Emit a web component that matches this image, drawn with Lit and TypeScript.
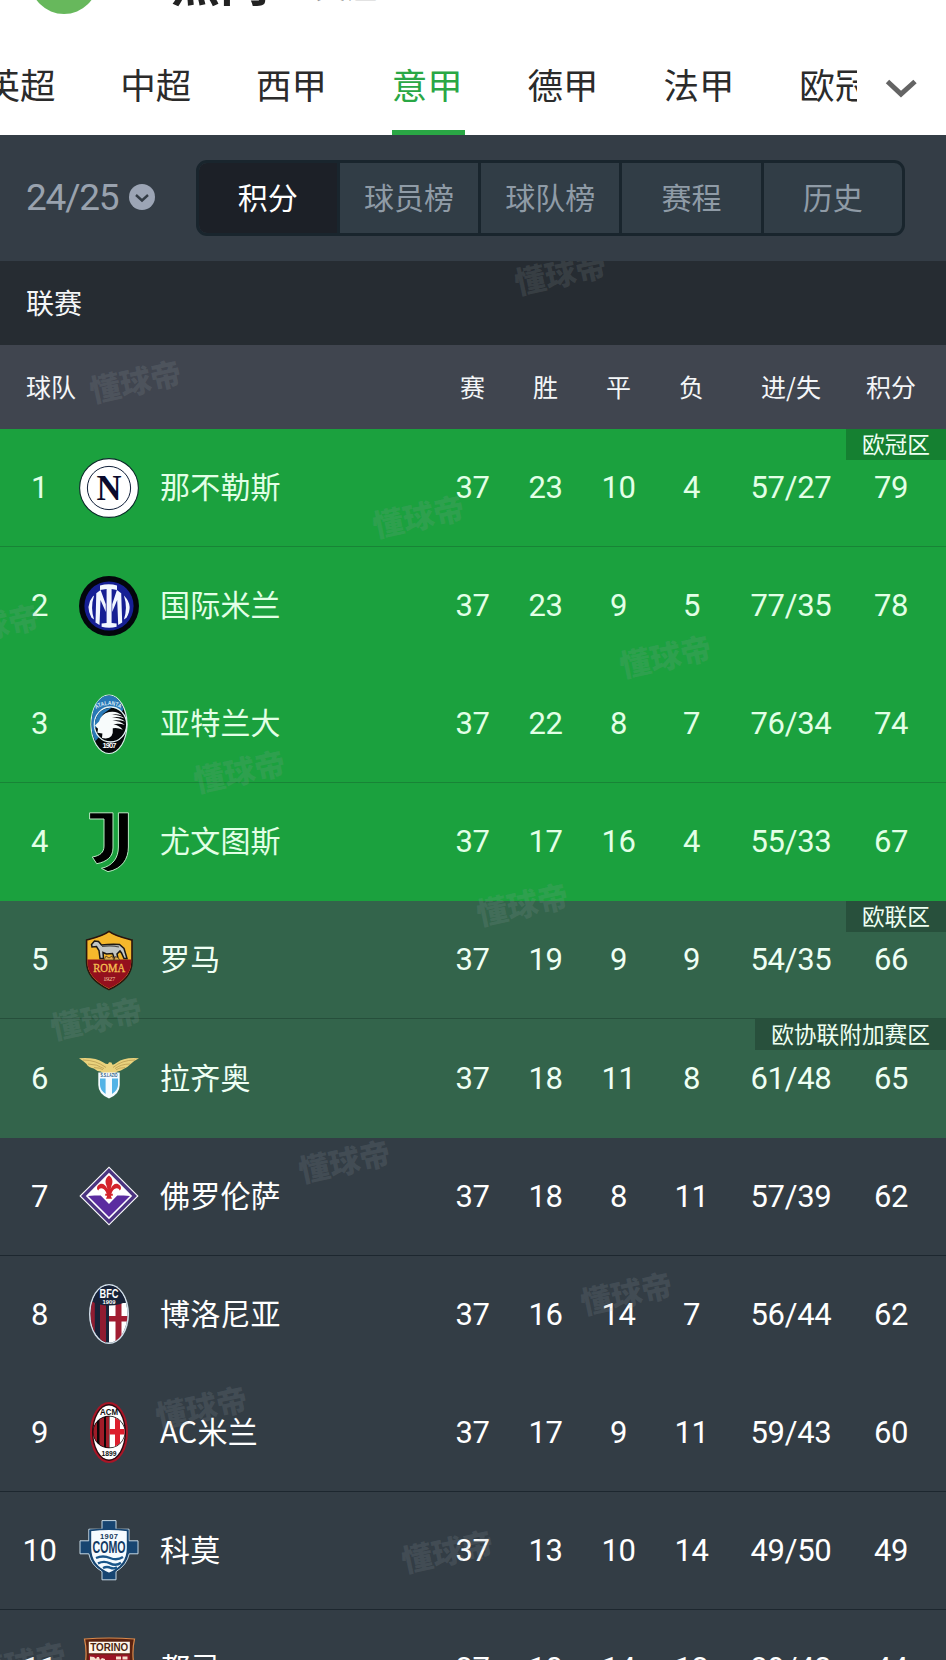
import { html, svg, css, LitElement } from 'lit'
import { customElement, property, state } from 'lit/decorators.js'
import { classMap } from 'lit/directives/class-map.js'
import { styleMap } from 'lit/directives/style-map.js'

interface Team {
  rank: number
  name: string
  crest: string
  played: number
  won: number
  drawn: number
  lost: number
  goals: string
  points: number
  zone?: 'ucl' | 'uel'
  badge?: string
  line?: boolean
}

const LEAGUES = ['英超', '中超', '西甲', '意甲', '德甲', '法甲', '欧冠']
const SECTIONS = ['积分', '球员榜', '球队榜', '赛程', '历史']
const COLUMNS = ['赛', '胜', '平', '负', '进/失', '积分']

const TEAMS: Team[] = [
  { rank: 1, name: '那不勒斯', crest: 'napoli', played: 37, won: 23, drawn: 10, lost: 4, goals: '57/27', points: 79, zone: 'ucl', badge: '欧冠区', line: true },
  { rank: 2, name: '国际米兰', crest: 'inter', played: 37, won: 23, drawn: 9, lost: 5, goals: '77/35', points: 78, zone: 'ucl' },
  { rank: 3, name: '亚特兰大', crest: 'atalanta', played: 37, won: 22, drawn: 8, lost: 7, goals: '76/34', points: 74, zone: 'ucl', line: true },
  { rank: 4, name: '尤文图斯', crest: 'juventus', played: 37, won: 17, drawn: 16, lost: 4, goals: '55/33', points: 67, zone: 'ucl' },
  { rank: 5, name: '罗马', crest: 'roma', played: 37, won: 19, drawn: 9, lost: 9, goals: '54/35', points: 66, zone: 'uel', badge: '欧联区', line: true },
  { rank: 6, name: '拉齐奥', crest: 'lazio', played: 37, won: 18, drawn: 11, lost: 8, goals: '61/48', points: 65, zone: 'uel', badge: '欧协联附加赛区' },
  { rank: 7, name: '佛罗伦萨', crest: 'fiorentina', played: 37, won: 18, drawn: 8, lost: 11, goals: '57/39', points: 62, line: true },
  { rank: 8, name: '博洛尼亚', crest: 'bologna', played: 37, won: 16, drawn: 14, lost: 7, goals: '56/44', points: 62 },
  { rank: 9, name: 'AC米兰', crest: 'milan', played: 37, won: 17, drawn: 9, lost: 11, goals: '59/43', points: 60, line: true },
  { rank: 10, name: '科莫', crest: 'como', played: 37, won: 13, drawn: 10, lost: 14, goals: '49/50', points: 49, line: true },
  { rank: 11, name: '都灵', crest: 'torino', played: 37, won: 10, drawn: 14, lost: 13, goals: '39/43', points: 44 },
]

// centres of the repeated watermark, relative to the table
const MARKS = [
  [560, 11], [135, 119], [418, 254], [-7, 363], [665, 394], [239, 509], [522, 642],
  [96, 756], [344, 899], [626, 1031], [201, 1145], [447, 1289], [20, 1401],
]

const CRESTS: Record<string, unknown> = {
  napoli: svg`
    <circle cx="30" cy="30" r="29.4" fill="#fff" stroke="#0c2a2a" stroke-width="1.1"/>
    <circle cx="30" cy="30" r="21.6" fill="none" stroke="#10203a" stroke-width="1"/>
    <text x="30" y="41.8" font-size="35" font-weight="700" text-anchor="middle" textLength="25"
      lengthAdjust="spacingAndGlyphs" font-family="Liberation Serif, serif" fill="#0a0a2c">N</text>`,
  inter: svg`
    <circle cx="30" cy="30" r="30" fill="#03060c"/>
    <circle cx="30" cy="30" r="24.6" fill="#161f94"/>
    <g fill="#f2f7ff">
      <path d="M21 9.4Q30 7 38 9.4V14l-5.4-1v34l5 .4v3.4q-7.600 1.800-15 0v-3.400l5-.4V13L21 14z"/>
      <path d="M17.300 17.200l4.300-3.300 5.200 14.400v7.800l-5.300-12-1 25-4-2.600z"/>
      <path d="M42.200 17.200l-4.300-3.300-4.700 14.400v7.800l5-12 1 25 4-2.600z"/>
      <path d="M13.800 20.600Q6 30 12.500 41.800l2.600 1.600q-4-12 0-24z"/>
      <path d="M45.800 20.600Q54.500 30 47.500 41.800l-2.600 1.600q4-12 0-24z"/>
    </g>`,
  atalanta: svg`
    <ellipse cx="30" cy="30.200" rx="18.600" ry="29.800" fill="#d9f3ea"/>
    <ellipse cx="30" cy="30.200" rx="17.400" ry="28.700" fill="#05070a"/>
    <path d="M12.700 33C12 15 19 1.500 30 1.500c7 0 12 6 14.500 14L16.500 47q-3.500-6-3.800-14z" fill="#2878b6"/>
    <ellipse cx="31.500" cy="30.500" rx="16.200" ry="17.500" fill="#05070a" stroke="#e5f4f6" stroke-width="1.300"/>
    <path d="M15.800 34Q15 15 33 13.600L24 20l-5 13z" fill="#2878b6"/>
    <path d="M16 31.500l4-4q2-7.500 10-9.500 8-1.500 13 3.500-6-2-11-.6 8-.5 13.600 3.600-7-2.200-12.600-1 8 .2 13 4-6-2-12.600-1 8 .5 12.400 4.400-6-2-11.400-.6 6 1.200 9.400 5.400-6-2.600-10-1.400Q35 46.500 23 44l.4-4.500-5-.8.6-4z" fill="#f7fbfb"/>
    <path id="arc-atalanta" d="M17 15.200Q30 6.800 43 15.200" fill="none"/>
    <text font-size="6" font-weight="700" font-family="Liberation Sans, sans-serif" fill="#dcecf6">
      <textPath href="#arc-atalanta" textLength="26" lengthAdjust="spacingAndGlyphs">ATALANTA</textPath>
    </text>
    <text x="30.500" y="54" font-size="7.500" font-weight="700" text-anchor="middle" textLength="14" font-family="Liberation Sans, sans-serif" fill="#fff">1907</text>`,
  juventus: svg`
    <g fill="#000" stroke="#b8ecc2" stroke-width="1" stroke-linejoin="round">
      <path d="M10.600.8H34V36c0 9-6.500 14-16.300 15.700L13.300 45C21 43.700 25 40.500 25 34V7H10.600z"/>
      <path d="M39.400.8h10V35c0 12-6.400 22-20.400 24.700l-6.600-3.400C33.500 54 39.400 46 39.400 35z"/>
    </g>`,
  roma: svg`
    <path d="M30 1.400C36 6 44 7.800 53 10V32q0 17-23 27.600Q7.600 49 7.600 32V10C16 7.800 24 6 30 1.400z" fill="#f5b82c" stroke="#2b140c" stroke-width="1.600"/>
    <path d="M8.400 29.400H52.200V32q0 16-22.200 26.600Q8.400 48 8.400 32z" fill="#94101d"/>
    <path d="M12.500 14.500l3-3.500 4 .5 3 3.500q9-1 18-.5l4.500 4 3 10h-3l-2.500-5.500-1.500-2-3 3 1 4.500h-3.500l-2-5-6 .5-3.500-1.500.5 6h-3.500l-1-8-2.500-4-4.500.5z" fill="#c3c6c4" stroke="#1c1815" stroke-width="1.500"/>
    <path d="M23 16.500q9-1.500 17 .5" fill="none" stroke="#4a4a48" stroke-width="1.200"/>
    <path d="M25 30l2-4 3 2 3-2 2 4zM35 30l1.500-3.500 3 1.500 1 2z" fill="#e2ae52" stroke="#543a1c" stroke-width=".8"/>
    <text x="30.200" y="42" font-size="11.500" text-anchor="middle" textLength="32" lengthAdjust="spacingAndGlyphs" font-family="Liberation Serif, serif" fill="#f6c052" stroke="#f6c052" stroke-width=".3">ROMA</text>
    <text x="30.200" y="51.400" font-size="6.500" text-anchor="middle" textLength="12" font-family="Liberation Serif, serif" fill="#f6c8a0">1927</text>`,
  lazio: svg`
    <path d="M0 10.300Q16 9 24.500 14.500q3 2 4.500 1.500l1-1.800 2.400.4 1 2q1.600.4 4.600-2Q45 9 60 10.300q-5 2.400-8.300 5.700-3 3.200-6.700 4.800-2.800 2.400-6.500 2.600-4 3-8.300 2.600-5 .4-8.500-2.600-4 0-7-2.800Q9 19 7.500 16 4 12.700 0 10.300z" fill="#ead27c"/>
    <path d="M4 12q13 0 23 7.500M9 16q9 0 16 4.600M15 19.600q6 0 9 2.200M56 12q-13 0-22 7.500M51 16q-9 0-15 4.600M46 19.600q-6 0-9 2.200" fill="none" stroke="#b99c52" stroke-width=".8"/>
    <path d="M19.300 24.600H40.700V37q0 9-10.700 13.600Q19.300 46 19.300 37z" fill="#f5fbff"/>
    <path d="M21 30.400h5.600V46Q21 42 21 37zM33 30.400h6V37q0 5-6 9z" fill="#52b3e6"/>
    <text x="30" y="29.400" font-size="4.800" font-weight="700" text-anchor="middle" textLength="17" lengthAdjust="spacingAndGlyphs" font-family="Liberation Sans, sans-serif" fill="#27577c">S.S.LAZIO</text>`,
  fiorentina: svg`
    <path d="M30 .4L59.600 30 30 59.600.4 30z" fill="#fff"/>
    <path d="M30 2L58 30 30 58 2 30z" fill="#4b3480"/>
    <path d="M30 6.800L53.200 30 30 53.200 6.800 30z" fill="#fff"/>
    <path d="M15.500 29.600h6.200L30 38l8.300-8.400h6.200L51 30 30 51 9 30z" fill="#5a2ca0"/>
    <path d="M30 9.500c3.600 2.500 4.300 6 2.600 9.800l-1 3.700c2-5 6-7 9.400-3.600 1.500 1.600 1.300 4-.3 5-1.300-3-5-2.700-7.400 1l-1 2.400h1.500v2h-2l1.200 3h-6l1.200-3h-2v-2h1.500l-1-2.400c-2.400-3.700-6.100-4-7.400-1-1.600-1-1.800-3.400-.3-5 3.400-3.400 7.400-1.400 9.400 3.600l-1-3.700c-1.700-3.800-1-7.300 2.600-9.800z" fill="#d4232c"/>`,
  bologna: svg`
    <clipPath id="clip-bologna"><ellipse cx="30" cy="30" rx="18.400" ry="28.600"/></clipPath>
    <ellipse cx="30" cy="30" rx="20" ry="30" fill="#d3e0ea"/>
    <g clip-path="url(#clip-bologna)">
      <path d="M10 0h40v60H10z" fill="#182338"/>
      <path d="M10 18h5.800v42H10zM21 18h6v42h-6z" fill="#8f1c31"/>
      <path d="M30 19h20v41H30z" fill="#fff"/>
      <path d="M36.500 18h6v42h-6zM30 32h20v5.600H30z" fill="#a11c31"/>
      <path d="M10 0h40v15.500Q42 21.500 30 21.500T10 15.500z" fill="#182338"/>
    </g>
    <text x="30" y="14" font-size="13" font-weight="700" text-anchor="middle" textLength="19" lengthAdjust="spacingAndGlyphs" font-family="Liberation Sans, sans-serif" fill="#fff">BFC</text>
    <text x="30" y="20" font-size="5.800" font-weight="700" text-anchor="middle" textLength="13" font-family="Liberation Sans, sans-serif" fill="#fff">1909</text>`,
  milan: svg`
    <clipPath id="clip-milan"><circle cx="30" cy="30" r="15.600"/></clipPath>
    <ellipse cx="30" cy="30.500" rx="19" ry="30.500" fill="#a81526"/>
    <ellipse cx="30" cy="30.500" rx="17" ry="28.400" fill="#2a0a10"/>
    <ellipse cx="30" cy="30.500" rx="15.600" ry="27" fill="#fff"/>
    <circle cx="30" cy="30" r="16.200" fill="#0a0708"/>
    <g clip-path="url(#clip-milan)">
      <path d="M14 10h4v40h-4zM20.500 10h4.500v40h-4.500zM27 10h3v40h-3z" fill="#a01c28"/>
      <path d="M30.500 10H47v40H30.500z" fill="#fff"/>
      <path d="M36 10h5v40h-5zM30.500 27h16v5.600h-16z" fill="#dc1f2d"/>
    </g>
    <text x="30" y="13.400" font-size="9.500" font-weight="700" text-anchor="middle" textLength="18" lengthAdjust="spacingAndGlyphs" font-family="Liberation Sans, sans-serif" fill="#111">ACM</text>
    <text x="30" y="53.600" font-size="8" font-weight="700" text-anchor="middle" textLength="15" lengthAdjust="spacingAndGlyphs" font-family="Liberation Sans, sans-serif" fill="#111">1899</text>`,
  como: svg`
    <path d="M23 .6h14v8.600h13v11.600h9v13H50.200Q48 45 37 51.600v8.200H23v-8.200Q12 45 9.800 33.800H1v-13h8.800V9.200H23z" fill="#174571" stroke="#c5d8e4" stroke-width="1"/>
    <path d="M11.400 10.400Q30 8 48.600 10.400V28q0 18-18.600 25.400Q11.400 46 11.400 28z" fill="#f6fbff" stroke="#174571" stroke-width="1.600"/>
    <text x="30" y="18.800" font-size="7.500" font-weight="700" text-anchor="middle" textLength="18" font-family="Liberation Sans, sans-serif" fill="#18395a">1907</text>
    <text x="30" y="33.400" font-size="17" font-weight="700" text-anchor="middle" textLength="33" lengthAdjust="spacingAndGlyphs" font-family="Liberation Sans, sans-serif" fill="#123a63">COMO</text>
    <path d="M17 38q7-3 14 0t13-1M19 43.400q6-3 12 0t11-.6M24 48q4-2 8 0 3 1 6-.6" fill="none" stroke="#1a568a" stroke-width="2.400"/>`,
  torino: svg`
    <path d="M5.500 1Q30-1 55.500 1Q53 12 54.500 24 55 50 30 60 6 50 6.500 24 8 12 5.500 1z" fill="#5a2210" stroke="#d98a4c" stroke-width="1.200"/>
    <path d="M9.800 3.800h41v11.400h-41z" fill="#fff6ea"/>
    <path d="M9.800 16.500h41V30Q50 50 30 57 10 50 9.800 30z" fill="#9a1525"/>
    <text x="30.200" y="13" font-size="10.500" font-weight="700" text-anchor="middle" textLength="38" lengthAdjust="spacingAndGlyphs" font-family="Liberation Sans, sans-serif" fill="#4a2410">TORINO</text>
    <path d="M11 18.500l4 .5 2 2 1-2h2l1 3 2-2 3 1v10H11zM37 18.500h5v3h-5zM43.500 18.500h5v3h-5z" fill="#f6dccb"/>`,
}

@customElement('team-crest')
export class TeamCrest extends LitElement {
  static styles = css`
    :host {
      display: block;
      width: 60px;
      height: 60px;
    }

    .crest {
      display: block;
      overflow: visible;
    }
  `

  @property({ type: String })
  name = ''

  render() {
    return html`<svg class="crest" width="60" height="60" viewBox="0 0 60 60">${CRESTS[this.name]}</svg>`
  }
}

@customElement('team-row')
export class TeamRow extends LitElement {
  static styles = css`
    :host {
      display: block;
      height: 118.1px;
    }

    .row {
      position: relative;
      display: flex;
      align-items: center;
      box-sizing: border-box;
      height: 100%;
      padding: 0 18px 0 0;
      color: #fff;
      background: #333d45;
      border-bottom: 1px solid transparent;
      font-size: 30px;
    }

    .line {
      border-bottom-color: #1d272f;
    }

    .ucl {
      background: #1ba13e;
      color: #e2ffe6;
    }

    .uel {
      background: #33644b;
      color: #effff4;
    }

    .ucl.line {
      border-bottom-color: #188436;
    }

    .uel.line {
      border-bottom-color: #264f3b;
    }

    .rank {
      width: 79px;
      text-align: center;
    }

    .name {
      flex: 1;
      padding-left: 21px;
      margin-top: -5px;
      letter-spacing: .2px;
    }

    .num {
      font-family: Roboto, 'Noto Sans CJK SC', sans-serif;
      font-size: 31px;
      letter-spacing: -.3px;
    }

    .cell {
      width: 73px;
      text-align: center;
    }

    .goals {
      width: 126px;
    }

    .points {
      width: 74px;
    }

    .badge {
      position: absolute;
      top: 0;
      right: 0;
      height: 31px;
      line-height: 29px;
      padding: 0 16px;
      font-size: 22.7px;
      color: #eefff2;
      background: rgba(0, 0, 0, .2);
    }
  `

  @property({ attribute: false })
  team!: Team

  render() {
    const t = this.team
    return html`
      <div class=${classMap({ row: true, line: !!t.line, ucl: t.zone === 'ucl', uel: t.zone === 'uel' })}>
        <div class="rank num">${t.rank}</div>
        <team-crest name=${t.crest}></team-crest>
        <div class="name">${t.name}</div>
        ${[t.played, t.won, t.drawn, t.lost].map(n => html`<div class="cell num">${n}</div>`)}
        <div class="cell num goals">${t.goals}</div>
        <div class="cell num points">${t.points}</div>
        ${t.badge ? html`<div class="badge">${t.badge}</div>` : ''}
      </div>
    `
  }
}

@customElement('app-root')
export class AppRoot extends LitElement {
  static styles = css`
    :host {
      display: block;
      width: 946px;
      height: 1660px;
      overflow: hidden;
      background: #333d45;
      font-family: 'Noto Sans CJK SC', sans-serif;
    }

    .top {
      display: flex;
      align-items: flex-end;
      height: 30px;
      background: #fff;
    }

    .avatar {
      flex: none;
      width: 68px;
      height: 68px;
      margin: 0 0 16px 30px;
      border-radius: 50%;
      background: #67b85c;
    }

    .hot {
      margin: 0 0 22px 73px;
      font-size: 49px;
      line-height: 56px;
      font-weight: 700;
      color: #222;
    }

    .more {
      margin: 0 0 25px 46px;
      font-size: 31px;
      line-height: 40px;
      color: #999;
    }

    .leagues {
      display: flex;
      height: 105px;
      background: #fff;
    }

    .tabs {
      display: flex;
      width: 857px;
      overflow: hidden;
    }

    .tab {
      position: relative;
      flex: none;
      width: 135.8px;
      line-height: 107px;
      text-align: center;
      font-size: 35.5px;
      color: #2b2b2b;
    }

    .tab:first-child {
      margin-left: -48px;
    }

    .tab.on {
      color: #2aa745;
    }

    .tab.on::after {
      content: '';
      position: absolute;
      left: 32.5px;
      bottom: 0;
      width: 73px;
      height: 5px;
      background: #2aa745;
    }

    .expand {
      margin: 49px 0 0 28px;
    }

    .toolbar {
      display: flex;
      align-items: center;
      height: 126px;
      box-sizing: border-box;
      padding: 0 41px 0 26px;
      background: #343d46;
    }

    .season {
      display: flex;
      align-items: center;
      gap: 11px;
      width: 169.5px;
      padding-bottom: 2px;
      font-family: Roboto, sans-serif;
      font-size: 37px;
      letter-spacing: -1.2px;
      color: #99a2ae;
    }

    .sections {
      flex: 1;
      display: flex;
      box-sizing: border-box;
      height: 76px;
      border: 3px solid #19252d;
      border-radius: 11px;
      overflow: hidden;
      background: #313d46;
    }

    .section {
      flex: 1;
      line-height: 67px;
      text-align: center;
      font-size: 30px;
      color: #8f9ba6;
      border-left: 3px solid #19252d;
    }

    .section:first-child {
      border-left: 0;
    }

    .section.on {
      color: #fff;
      background: #1c2027;
    }

    .table {
      position: relative;
      overflow: hidden;
      height: 1399px;
    }

    .caption {
      height: 84px;
      line-height: 82px;
      padding-left: 26px;
      font-size: 28px;
      color: #f4f6f8;
      background: #262c32;
    }

    .head {
      display: flex;
      height: 84px;
      line-height: 83px;
      padding: 0 18px 0 26px;
      font-size: 25px;
      color: #f4f6f8;
      background: #40454f;
    }

    .team {
      flex: 1;
    }

    .col {
      width: 73px;
      text-align: center;
    }

    .col:nth-last-child(2) {
      width: 126px;
    }

    .col:last-child {
      width: 74px;
    }

    .mark {
      position: absolute;
      transform: translate(-50%, -50%) rotate(-12deg);
      font-size: 31px;
      line-height: 1;
      font-weight: 900;
      white-space: nowrap;
      color: rgba(150, 160, 165, .17);
      pointer-events: none;
    }
  `

  @state()
  league = 3

  @state()
  section = 0

  render() {
    return html`
      <header class="top">
        <div class="avatar"></div>
        <div class="hot">热门</div>
        <div class="more">关注</div>
      </header>
      <nav class="leagues">
        <div class="tabs">
          ${LEAGUES.map((name, i) => html`
            <div class=${classMap({ tab: true, on: i === this.league })} @click=${() => { this.league = i }}>${name}</div>
          `)}
        </div>
        <svg class="expand" width="33" height="20" viewBox="0 0 33 20">
          <path d="M2.500 2.500L16 15 30 2.500" fill="none" stroke="#646464" stroke-width="5"/>
        </svg>
      </nav>
      <div class="toolbar">
        <div class="season">
          24/25
          <svg width="26" height="26" viewBox="0 0 26 26">
            <circle cx="13" cy="13" r="13" fill="#9ca5b5"/>
            <path d="M7 11l6 5.500 6-5.500" fill="none" stroke="#343d46" stroke-width="2.400"/>
          </svg>
        </div>
        <div class="sections">
          ${SECTIONS.map((name, i) => html`
            <div class=${classMap({ section: true, on: i === this.section })} @click=${() => { this.section = i }}>${name}</div>
          `)}
        </div>
      </div>
      <div class="table">
        <div class="caption">联赛</div>
        <div class="head">
          <div class="team">球队</div>
          ${COLUMNS.map(name => html`<div class="col">${name}</div>`)}
        </div>
        ${TEAMS.map(team => html`<team-row .team=${team}></team-row>`)}
        ${MARKS.map(([x, y]) => html`
          <span class="mark" style=${styleMap({ left: `${x}px`, top: `${y}px` })}>懂球帝</span>
        `)}
      </div>
    `
  }
}

declare global {
  interface HTMLElementTagNameMap {
    'team-crest': TeamCrest
    'team-row': TeamRow
    'app-root': AppRoot
  }
}
